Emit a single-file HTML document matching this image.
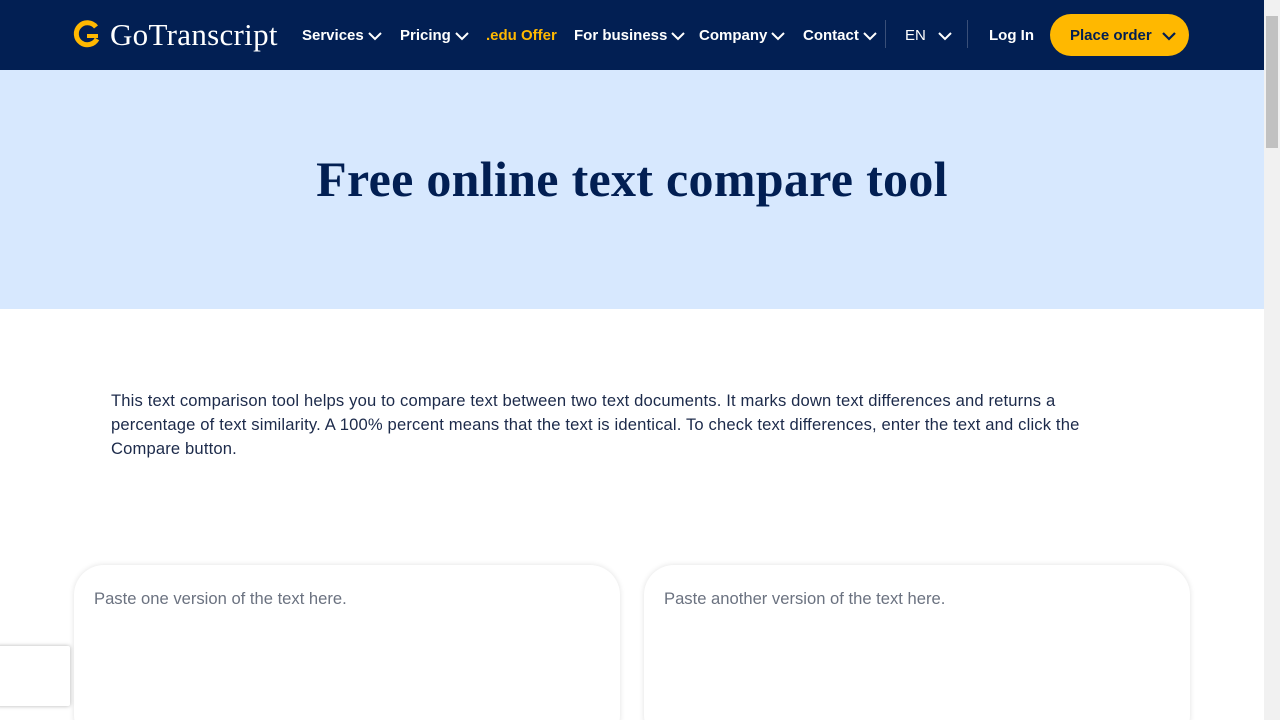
<!DOCTYPE html>
<html><head><meta charset="utf-8"><style>
*{box-sizing:border-box;margin:0;padding:0}
html{overflow:hidden;width:1280px;height:720px}
body{width:1280px;height:720px;overflow:hidden;font-family:"Liberation Sans",sans-serif;background:#fff;position:relative}
.nav{position:absolute;left:0;top:0;width:1264px;height:70px;background:#021f53}
.logo{position:absolute;left:73px;top:19px;}
.logotext{position:absolute;left:110px;top:17px;font-family:"Liberation Serif",serif;font-size:31px;color:#fff;letter-spacing:0.3px}
.ni{position:absolute;top:27px;font-size:15px;font-weight:bold;color:#fff;white-space:nowrap}
.ni svg{vertical-align:middle;margin-left:4px}
.sep{position:absolute;top:20px;width:1px;height:28px;background:#3a4f78}
.btn{position:absolute;left:1050px;top:14px;width:139px;height:42px;border-radius:21px;background:#ffb800;color:#021f53;font-size:15px;font-weight:bold;padding:13px 0 0 20px}
.hero{position:absolute;left:0;top:70px;width:1264px;height:239px;background:#d7e8fe}
h1{position:absolute;left:0;width:1264px;top:150px;text-align:center;font-family:"Liberation Serif",serif;font-size:50px;color:#021f53;font-weight:bold;letter-spacing:0.3px}
.p{position:absolute;left:111px;top:389px;width:990px;font-size:16.6px;line-height:24px;color:#1c2a4a;letter-spacing:0.15px}
.ta{position:absolute;top:565px;width:546px;height:180px;border-radius:30px;background:#fff;box-shadow:0 0 6px rgba(0,0,0,.12);padding:22px 20px;font-size:16.6px;color:#6b7280}
.rc{position:absolute;left:-4px;top:646px;width:74px;height:60px;background:#fff;box-shadow:0 0 4px rgba(0,0,0,.3);border-radius:2px}
.sb{position:absolute;left:1264px;top:0;width:16px;height:720px;background:#f1f1f1}
.th{position:absolute;left:1266px;top:16px;width:12px;height:132px;background:#c1c1c1}
</style></head><body>
<div class="nav">
<svg class="logo" width="28" height="32" viewBox="0 0 28 32"><path d="M23 8 A11 11 0 1 0 24 20" fill="none" stroke="#ffb800" stroke-width="5"/><path d="M14 17h11" stroke="#ffb800" stroke-width="4"/></svg>
<div class="logotext">GoTranscript</div>
<div class="ni" style="left:302px">Services<svg width="14" height="9"><path d="M1 1l6 6 6-6" fill="none" stroke="#fff" stroke-width="2"/></svg></div>
<div class="ni" style="left:400px">Pricing<svg width="14" height="9"><path d="M1 1l6 6 6-6" fill="none" stroke="#fff" stroke-width="2"/></svg></div>
<div class="ni" style="left:486px;color:#ffb800">.edu Offer</div>
<div class="ni" style="left:574px">For business<svg width="14" height="9"><path d="M1 1l6 6 6-6" fill="none" stroke="#fff" stroke-width="2"/></svg></div>
<div class="ni" style="left:699px">Company<svg width="14" height="9"><path d="M1 1l6 6 6-6" fill="none" stroke="#fff" stroke-width="2"/></svg></div>
<div class="ni" style="left:803px">Contact<svg width="14" height="9"><path d="M1 1l6 6 6-6" fill="none" stroke="#fff" stroke-width="2"/></svg></div>
<div class="sep" style="left:885px"></div>
<div class="ni" style="left:905px;font-weight:normal">EN <svg width="14" height="9" style="margin-left:8px"><path d="M1 1l6 6 6-6" fill="none" stroke="#fff" stroke-width="2"/></svg></div>
<div class="sep" style="left:967px"></div>
<div class="ni" style="left:989px">Log In</div>
<div class="btn">Place order <svg width="14" height="9" style="margin-left:6px;vertical-align:middle"><path d="M1 1l6 6 6-6" fill="none" stroke="#021f53" stroke-width="2.2"/></svg></div>
</div>
<div class="hero"></div>
<h1>Free online text compare tool</h1>
<div class="p">This text comparison tool helps you to compare text between two text documents. It marks down text differences and returns a percentage of text similarity. A 100% percent means that the text is identical. To check text differences, enter the text and click the Compare button.</div>
<div class="ta" style="left:74px;padding-top:24px">Paste one version of the text here.</div>
<div class="ta" style="left:644px;padding-top:24px">Paste another version of the text here.</div>
<div class="rc"></div>
<div class="sb"></div><div class="th"></div>
</body></html>
